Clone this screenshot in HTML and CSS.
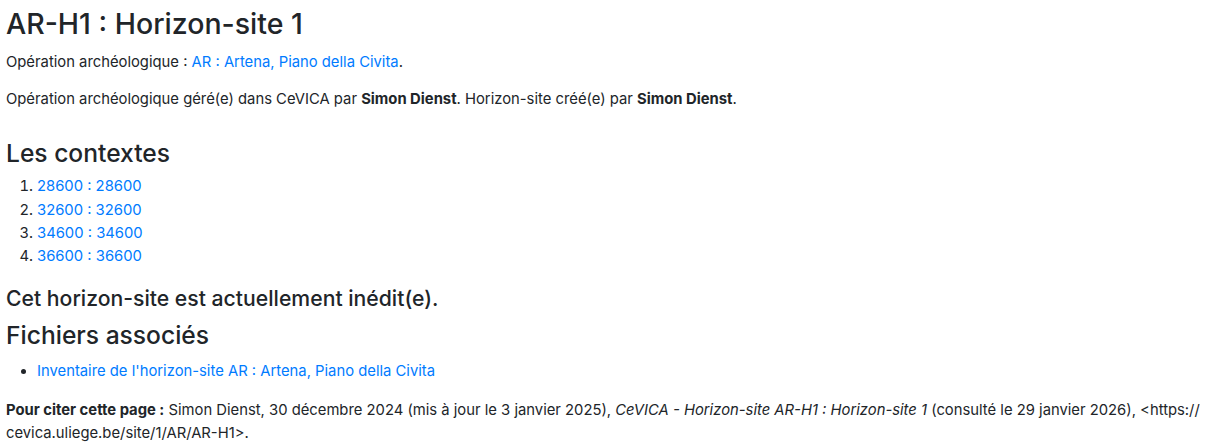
FILE: index.html
```html
<!DOCTYPE html>
<html lang="fr">
<head>
<meta charset="utf-8">
<title>AR-H1 : Horizon-site 1</title>
<link rel="stylesheet" href="styles.css">
</head>
<body>
<main class="page">
  <h1 class="title">AR-H1 : Horizon-site 1</h1>
  <p class="text">Opération archéologique : <a href="#">AR : Artena, Piano della Civita</a>.</p>
  <p class="text">Opération archéologique géré(e) dans CeVICA par <strong>Simon Dienst</strong>. Horizon-site créé(e) par <strong>Simon Dienst</strong>.</p>

  <h2 class="section-title">Les contextes</h2>
  <ol class="context-list">
    <li><a href="#">28600 : 28600</a></li>
    <li><a href="#">32600 : 32600</a></li>
    <li><a href="#">34600 : 34600</a></li>
    <li><a href="#">36600 : 36600</a></li>
  </ol>

  <h3 class="status">Cet horizon-site est actuellement inédit(e).</h3>

  <h2 class="section-title files-title">Fichiers associés</h2>
  <ul class="file-list">
    <li><a href="#">Inventaire de l'horizon-site AR : Artena, Piano della Civita</a></li>
  </ul>

  <p class="text citation"><strong>Pour citer cette page :</strong> Simon Dienst, 30 décembre 2024 (mis à jour le 3 janvier 2025), <em>CeVICA - Horizon-site AR-H1 : Horizon-site 1</em> (consulté le 29 janvier 2026), &lt;https://<wbr>cevica.uliege.be/site/1/AR/AR-H1&gt;.</p>
</main>
</body>
</html>
```

FILE: styles.css
```css
html, body {
  margin: 0;
  padding: 0;
  background: #ffffff;
}

body {
  font-family: Inter, "Liberation Sans", Arial, sans-serif;
  font-size: 14.8px;
  line-height: 23.3px;
  color: #212529;
}

.page {
  padding: 0 6px;
  width: 1212px;
}

a {
  color: #007bff;
  text-decoration: none;
}

strong {
  font-weight: 700;
}

.title {
  font-size: 28.5px;
  font-weight: 500;
  line-height: 1.2;
  margin: 7px 0 10px;
}

.text {
  margin: 0 0 14px;
}

.section-title {
  font-size: 24.6px;
  font-weight: 500;
  line-height: 1.2;
  margin: 27px 0 7px;
}

.context-list {
  margin: 0 0 18px;
  padding-left: 31px;
}

.status {
  font-size: 21.2px;
  font-weight: 500;
  line-height: 1.2;
  margin: 0 0 9px;
}

.files-title {
  margin: 0 0 10px;
}

.file-list {
  margin: 0 0 15px;
  padding-left: 31px;
}

.citation {
  margin: 0;
}
```
